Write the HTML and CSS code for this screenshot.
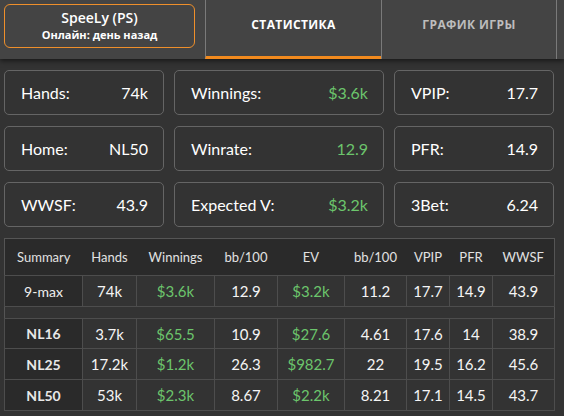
FILE: index.html
```html
<!DOCTYPE html>
<html>
<head>
<meta charset="utf-8">
<link rel="stylesheet" href="styles.css">
</head>
<body>
<div class="header">
  <div class="profile">
    <div class="name">SpeeLy (PS)</div>
    <div class="status">Онлайн: день назад</div>
  </div>
  <div class="tab active">СТАТИСТИКА</div>
  <div class="tab">ГРАФИК ИГРЫ</div>
</div>
<div class="main">
  <div class="cards">
    <div class="card"><span class="lbl">Hands:</span><span class="val">74k</span></div>
    <div class="card"><span class="lbl">Winnings:</span><span class="val green">$3.6k</span></div>
    <div class="card"><span class="lbl">VPIP:</span><span class="val">17.7</span></div>
    <div class="card"><span class="lbl">Home:</span><span class="val">NL50</span></div>
    <div class="card"><span class="lbl">Winrate:</span><span class="val green">12.9</span></div>
    <div class="card"><span class="lbl">PFR:</span><span class="val">14.9</span></div>
    <div class="card"><span class="lbl">WWSF:</span><span class="val">43.9</span></div>
    <div class="card"><span class="lbl">Expected V:</span><span class="val green">$3.2k</span></div>
    <div class="card"><span class="lbl">3Bet:</span><span class="val">6.24</span></div>
  </div>
  <table class="stats">
    <colgroup>
      <col class="c78"><col class="c54"><col class="c78"><col class="c63"><col class="c67"><col class="c62"><col class="c43"><col class="c43"><col class="c62">
    </colgroup>
    <thead>
      <tr><th>Summary</th><th>Hands</th><th>Winnings</th><th>bb/100</th><th>EV</th><th>bb/100</th><th>VPIP</th><th>PFR</th><th>WWSF</th></tr>
    </thead>
    <tbody>
      <tr class="r31"><td class="name light">9-max</td><td>74k</td><td class="green">$3.6k</td><td>12.9</td><td class="green">$3.2k</td><td>11.2</td><td>17.7</td><td>14.9</td><td>43.9</td></tr>
      <tr class="spacer"><td colspan="9"></td></tr>
      <tr class="r30"><td class="name">NL16</td><td>3.7k</td><td class="green">$65.5</td><td>10.9</td><td class="green">$27.6</td><td>4.61</td><td>17.6</td><td>14</td><td>38.9</td></tr>
      <tr class="r31"><td class="name">NL25</td><td>17.2k</td><td class="green">$1.2k</td><td>26.3</td><td class="green">$982.7</td><td>22</td><td>19.5</td><td>16.2</td><td>45.6</td></tr>
      <tr class="r31"><td class="name">NL50</td><td>53k</td><td class="green">$2.3k</td><td>8.67</td><td class="green">$2.2k</td><td>8.21</td><td>17.1</td><td>14.5</td><td>43.7</td></tr>
    </tbody>
  </table>
</div>
</body>
</html>
```
FILE: styles.css
```css
html, body {
  margin: 0;
  padding: 0;
  background: #333333;
  width: 564px;
  height: 416px;
  overflow: hidden;
  color: #ffffff;
  font-family: Lato, "Noto Sans", sans-serif;
}
.header {
  display: flex;
  height: 59px;
  background: #444444;
  box-shadow: 0 2px 5px rgba(0, 0, 0, 0.55);
  position: relative;
  z-index: 1;
}
.profile {
  box-sizing: border-box;
  margin: 4px 10px 0 4px;
  width: 191px;
  height: 44px;
  border: 1px solid #ee8f2b;
  border-radius: 6px;
  display: flex;
  flex-direction: column;
  align-items: center;
  font-family: "Open Sans", sans-serif;
  font-weight: 700;
  color: #ffffff;
}
.profile .name {
  font-size: 14px;
  line-height: 18px;
  margin-top: 4px;
  font-weight: 600;
}
.profile .status {
  font-size: 11px;
  line-height: 16px;
}
.tab {
  box-sizing: border-box;
  width: 176px;
  height: 59px;
  border-left: 1px solid #7a7a7a;
  display: flex;
  justify-content: center;
  padding-top: 16px;
  font-family: "Open Sans", sans-serif;
  font-weight: 700;
  font-size: 12px;
  letter-spacing: 0.4px;
  color: #bdbdbd;
}
.tab:last-child {
  border-right: 1px solid #7a7a7a;
}
.tab.active {
  color: #ffffff;
  border-bottom: 3px solid #f28a1e;
}
.main {
  padding: 11px 0 0 4px;
}
.cards {
  display: grid;
  grid-template-columns: 160px 210px 160px;
  grid-auto-rows: 45px;
  column-gap: 10px;
  row-gap: 11px;
}
.card {
  box-sizing: border-box;
  border: 1px solid #656565;
  border-radius: 5px;
  display: flex;
  justify-content: space-between;
  align-items: center;
  padding: 0 15px 0 16px;
  font-size: 16px;
}
.green {
  color: #6cc56c;
}
.stats {
  margin-top: 11px;
  border-collapse: collapse;
  table-layout: fixed;
  width: 550px;
  border: 1px solid #555555;
  font-size: 15px;
}
.c78 { width: 78px; }
.c54 { width: 54px; }
.c63 { width: 63px; }
.c67 { width: 67px; }
.c62 { width: 62px; }
.c43 { width: 43px; }
.stats th {
  height: 36px;
  background: #2a2a2a;
  font-weight: 400;
  font-size: 13px;
  color: #e2e2e2;
  padding: 0;
  text-align: center;
  border-bottom: 1px solid #4d4d4d;
}
.stats td {
  padding: 0;
  text-align: center;
  border: 1px solid #4d4d4d;
  color: #f5f5f5;
}
.stats td.green {
  color: #6cc56c;
}
.stats td.name {
  background: #2a2a2a;
  font-size: 14px;
  font-weight: 700;
  color: #e8e8e8;
}
.stats td.name.light {
  font-weight: 400;
  color: #f0f0f0;
}
.stats tr.r31 td { height: 30px; }
.stats tr.r30 td { height: 29px; }
.stats tr.spacer td {
  height: 11px;
  background: #333333;
  border-left: none;
  border-right: none;
}
```
